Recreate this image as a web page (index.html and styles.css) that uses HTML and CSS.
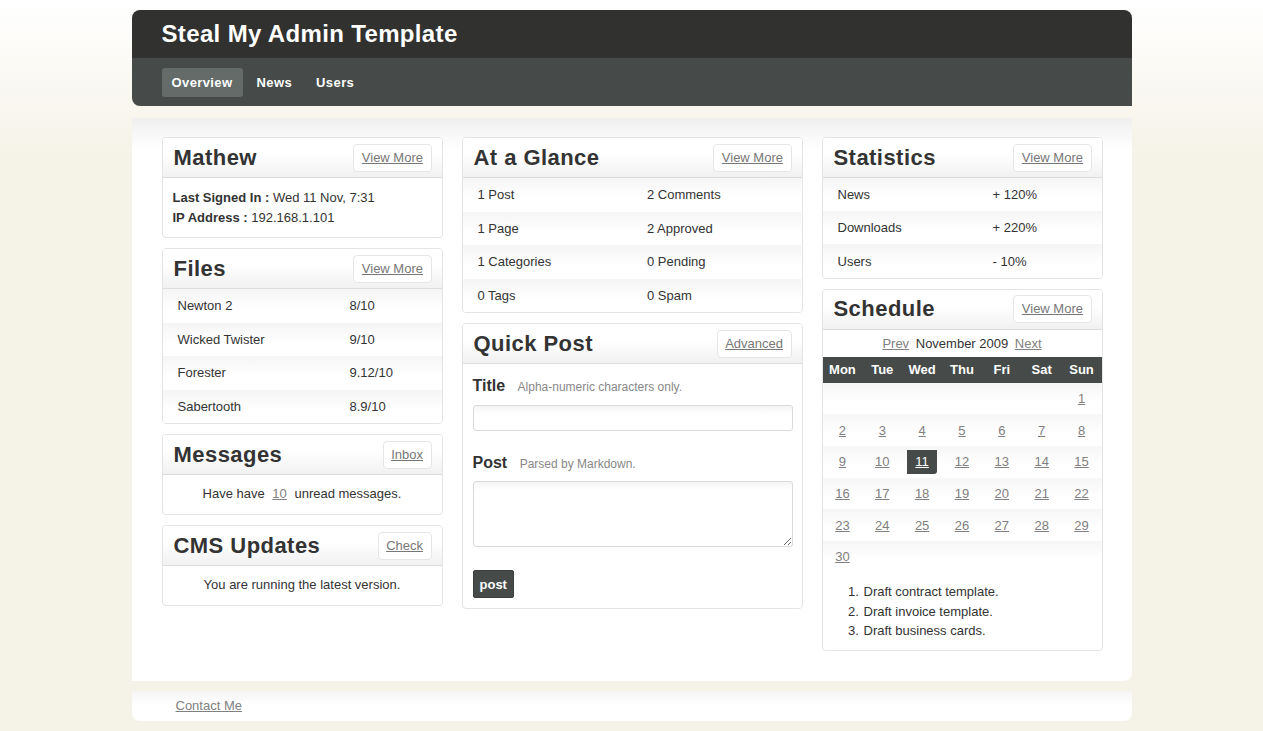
FILE: index.html
```html
<!DOCTYPE html>
<html>
<head>
<meta charset="utf-8">
<title>Steal My Admin Template</title>
<link rel="stylesheet" href="styles.css">
</head>
<body>
<div class="wrap">
  <header class="header">
    <div class="brand">Steal My Admin Template</div>
    <nav class="nav">
      <a class="tab active">Overview</a>
      <a class="tab">News</a>
      <a class="tab">Users</a>
    </nav>
  </header>

  <main class="main">
    <div class="col col-side">
      <section class="box">
        <div class="box-head"><h2>Mathew</h2><a class="btn">View More</a></div>
        <div class="box-body info">
          <div><b>Last Signed In :</b> Wed 11 Nov, 7:31</div>
          <div><b>IP Address :</b> 192.168.1.101</div>
        </div>
      </section>

      <section class="box">
        <div class="box-head"><h2>Files</h2><a class="btn">View More</a></div>
        <table class="rows files">
          <tr><td>Newton 2</td><td>8/10</td></tr>
          <tr><td>Wicked Twister</td><td>9/10</td></tr>
          <tr><td>Forester</td><td>9.12/10</td></tr>
          <tr><td>Sabertooth</td><td>8.9/10</td></tr>
        </table>
      </section>

      <section class="box">
        <div class="box-head"><h2>Messages</h2><a class="btn">Inbox</a></div>
        <div class="box-body center">Have have <a class="lnk">10</a> unread messages.</div>
      </section>

      <section class="box">
        <div class="box-head"><h2>CMS Updates</h2><a class="btn">Check</a></div>
        <div class="box-body center">You are running the latest version.</div>
      </section>
    </div>

    <div class="col col-mid">
      <section class="box">
        <div class="box-head"><h2>At a Glance</h2><a class="btn">View More</a></div>
        <table class="rows glance">
          <tr><td>1 Post</td><td>2 Comments</td></tr>
          <tr><td>1 Page</td><td>2 Approved</td></tr>
          <tr><td>1 Categories</td><td>0 Pending</td></tr>
          <tr><td>0 Tags</td><td>0 Spam</td></tr>
        </table>
      </section>

      <section class="box">
        <div class="box-head"><h2>Quick Post</h2><a class="btn">Advanced</a></div>
        <form class="box-body form">
          <label class="lbl">Title <span class="hint">Alpha-numeric characters only.</span></label>
          <input class="field" type="text">
          <label class="lbl lbl-post">Post <span class="hint">Parsed by Markdown.</span></label>
          <textarea class="field area"></textarea>
          <div><button class="submit" type="button">post</button></div>
        </form>
      </section>
    </div>

    <div class="col col-side">
      <section class="box">
        <div class="box-head"><h2>Statistics</h2><a class="btn">View More</a></div>
        <table class="rows stats">
          <tr><td>News</td><td>+ 120%</td></tr>
          <tr><td>Downloads</td><td>+ 220%</td></tr>
          <tr><td>Users</td><td>- 10%</td></tr>
        </table>
      </section>

      <section class="box">
        <div class="box-head"><h2>Schedule</h2><a class="btn">View More</a></div>
        <div class="cal-nav"><a class="lnk">Prev</a> November 2009 <a class="lnk">Next</a></div>
        <table class="cal">
          <thead>
            <tr><th>Mon</th><th>Tue</th><th>Wed</th><th>Thu</th><th>Fri</th><th>Sat</th><th>Sun</th></tr>
          </thead>
          <tbody>
            <tr><td></td><td></td><td></td><td></td><td></td><td></td><td><a class="lnk">1</a></td></tr>
            <tr><td><a class="lnk">2</a></td><td><a class="lnk">3</a></td><td><a class="lnk">4</a></td><td><a class="lnk">5</a></td><td><a class="lnk">6</a></td><td><a class="lnk">7</a></td><td><a class="lnk">8</a></td></tr>
            <tr><td><a class="lnk">9</a></td><td><a class="lnk">10</a></td><td><a class="lnk today">11</a></td><td><a class="lnk">12</a></td><td><a class="lnk">13</a></td><td><a class="lnk">14</a></td><td><a class="lnk">15</a></td></tr>
            <tr><td><a class="lnk">16</a></td><td><a class="lnk">17</a></td><td><a class="lnk">18</a></td><td><a class="lnk">19</a></td><td><a class="lnk">20</a></td><td><a class="lnk">21</a></td><td><a class="lnk">22</a></td></tr>
            <tr><td><a class="lnk">23</a></td><td><a class="lnk">24</a></td><td><a class="lnk">25</a></td><td><a class="lnk">26</a></td><td><a class="lnk">27</a></td><td><a class="lnk">28</a></td><td><a class="lnk">29</a></td></tr>
            <tr><td><a class="lnk">30</a></td><td></td><td></td><td></td><td></td><td></td><td></td></tr>
          </tbody>
        </table>
        <ol class="todo">
          <li>Draft contract template.</li>
          <li>Draft invoice template.</li>
          <li>Draft business cards.</li>
        </ol>
      </section>
    </div>
  </main>

  <footer class="footer"><a class="lnk">Contact Me</a></footer>
</div>
</body>
</html>
```

FILE: styles.css
```css
* { box-sizing: border-box; }

html, body {
  margin: 0;
  padding: 0;
}

body {
  min-height: 731px;
  background: #f5f2e7 linear-gradient(to bottom, #ffffff 0px, #f5f2e7 160px) no-repeat;
  font-family: "Liberation Sans", Arial, sans-serif;
  font-size: 13px;
  color: #333;
}

.wrap {
  width: 1000px;
  margin: 0 auto;
  padding-top: 10px;
}

/* header */
.header {
  border-radius: 8px 8px 0 8px;
  overflow: hidden;
}

.brand {
  height: 48px;
  background: #31312f;
  color: #fff;
  font-size: 24px;
  font-weight: bold;
  letter-spacing: 0.35px;
  line-height: 48px;
  padding-left: 30px;
}

.nav {
  height: 48px;
  background: #464b49;
  padding: 10px 30px 0;
  display: flex;
  gap: 4px;
}

.tab {
  display: block;
  height: 29px;
  line-height: 29px;
  padding: 0 10px;
  color: #fff;
  font-weight: bold;
  font-size: 13px;
  letter-spacing: 0.4px;
  border-radius: 3px;
}

.tab.active { background: #646b68; }

/* main */
.main {
  margin-top: 12px;
  background: #fff linear-gradient(to bottom, #efefef 0px, #ffffff 32px) no-repeat;
  padding: 19px 29px 30px 30px;
  display: flex;
  gap: 19px;
  align-items: flex-start;
  border-radius: 0 0 8px 0;
}

.col {
  display: flex;
  flex-direction: column;
  gap: 10px;
}

.col-side { width: 281px; }
.col-mid { width: 341px; }

.box {
  background: #fff;
  border: 1px solid #e4e4e4;
  border-radius: 4px;
  overflow: hidden;
}

.box-head {
  height: 40px;
  border-bottom: 1px solid #dcdcdc;
  background: linear-gradient(to bottom, #ffffff 0%, #ffffff 40%, #f1f1f1 100%);
  display: flex;
  align-items: center;
  justify-content: space-between;
  padding: 0 10px 0 11px;
}

.box-head h2 {
  margin: 0;
  font-size: 22px;
  font-weight: bold;
  color: #333;
  letter-spacing: 0.45px;
}

.btn {
  display: block;
  height: 28px;
  line-height: 26px;
  padding: 0 7.5px;
  border: 1px solid #e6e6e6;
  border-radius: 4px;
  background: #fff;
  color: #777;
  text-decoration: underline;
  font-size: 13px;
}

.lnk {
  color: #808080;
  text-decoration: underline;
}

.box-body { padding: 10px 10px 9px; line-height: 20px; }

.info b { font-weight: bold; }

.center {
  text-align: center;
  padding: 9px 10px 10px;
}

.center .lnk { margin: 0 4px; }

/* row tables */
.rows {
  width: 100%;
  border-collapse: collapse;
}

.rows tr {
  background: linear-gradient(to bottom, #f5f5f5 0%, #ffffff 60%);
}

.rows td {
  height: 33.5px;
  padding: 0 0 0 15px;
  vertical-align: middle;
}

.stats td { height: 33.3px; }

.files td:first-child { width: 172px; }
.glance td:first-child { width: 50%; }
.stats td:first-child { width: 155px; }

/* form */
.form {
  padding: 12px 10px 10px;
  line-height: normal;
}

.lbl {
  display: block;
  font-size: 16px;
  font-weight: bold;
  line-height: 20px;
  color: #333;
}

.lbl-post { margin-top: 22px; }

.hint {
  font-size: 12px;
  font-weight: normal;
  color: #888;
  margin-left: 8px;
}

.field {
  display: block;
  width: 320px;
  height: 26px;
  margin-top: 8px;
  border: 1px solid #dadada;
  border-radius: 3px;
  background: linear-gradient(to bottom, #f4f4f4 0px, #ffffff 8px);
  font-family: inherit;
  font-size: 13px;
}

.area {
  height: 66px;
  margin-top: 7px;
  resize: vertical;
}

.submit {
  margin-top: 23px;
  height: 28px;
  padding: 0 6px;
  background: #464b49;
  color: #fff;
  font-family: inherit;
  font-weight: bold;
  font-size: 13px;
  border: 1px solid #3a3e3c;
  border-radius: 2px;
}

/* calendar */
.cal-nav {
  height: 27px;
  line-height: 27px;
  text-align: center;
  color: #333;
}

.cal-nav .lnk { margin: 0 3px; }

.cal {
  width: 100%;
  border-collapse: collapse;
  table-layout: fixed;
}

.cal th {
  background: #464b49;
  color: #fff;
  font-weight: bold;
  height: 26px;
  font-size: 13px;
}

.cal tbody tr {
  background: linear-gradient(to bottom, #f6f6f6 0%, #ffffff 60%);
}

.cal td {
  height: 31.6px;
  text-align: center;
  vertical-align: middle;
}

.today {
  display: inline-block;
  background: #464b49;
  color: #fff;
  padding: 4px 8px;
  line-height: 16px;
  border-radius: 0 0 3px 0;
}

.todo {
  margin: 10px 0 0;
  padding: 0 0 9px 40px;
  line-height: 19.5px;
}

.todo li { padding-left: 1px; }

/* footer */
.footer {
  margin-top: 10px;
  height: 30px;
  line-height: 30px;
  padding-left: 44px;
  background: linear-gradient(to bottom, #f5f5f5 0px, #ffffff 14px);
  border-radius: 0 0 8px 8px;
}
```
